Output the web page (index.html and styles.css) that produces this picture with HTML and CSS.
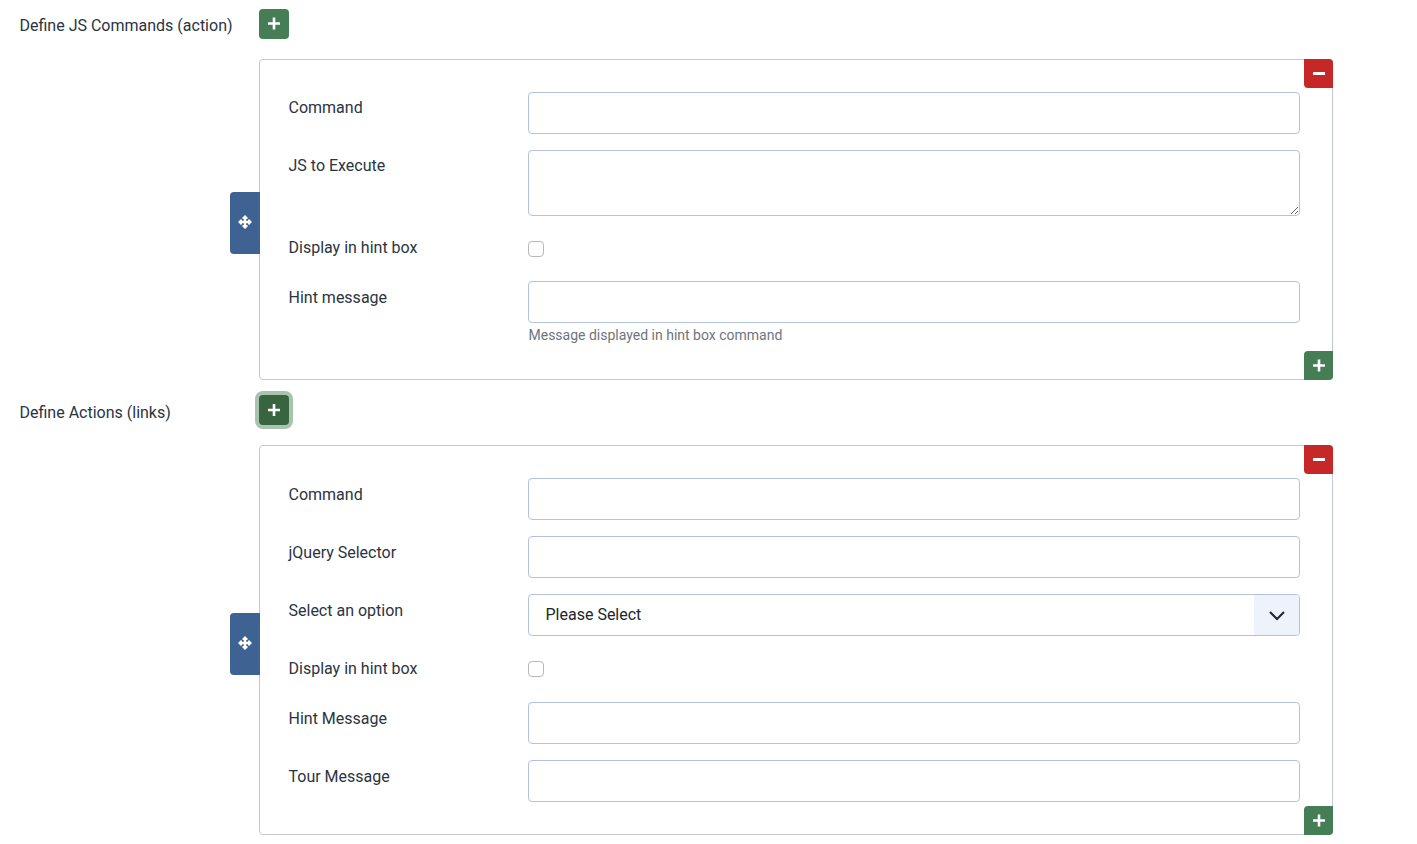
FILE: index.html
```html
<!DOCTYPE html>
<html lang="en">
<head>
<meta charset="utf-8">
<title>Define Commands</title>
<link rel="stylesheet" href="styles.css">
</head>
<body>
<svg class="sprite" width="0" height="0" aria-hidden="true">
  <symbol id="i-plus" viewBox="0 0 14 14"><path d="M5.700 1h2.600v4.700H13v2.600H8.300V13H5.700V8.300H1V5.700h4.700z" fill="#fff"/></symbol>
  <symbol id="i-minus" viewBox="0 0 14 14"><path d="M1 5.600h12v2.800H1z" fill="#fff"/></symbol>
  <symbol id="i-move" viewBox="0 0 14 14"><path d="M7 0l3 3-1 1H8.200v1.800H10V5l1-1 3 3-3 3-1-1V8.200H8.200V10H9l1 1-3 3-3-3 1-1h.8V8.200H4V9l-1 1-3-3 3-3 1 1v.8h1.800V4H5L4 3z" fill="#fff"/></symbol>
</svg>

<section class="field-head">
  <span class="head-label">Define JS Commands (action)</span>
  <button class="btn btn-add btn-square" type="button"><svg class="ico"><use href="#i-plus"/></svg></button>
</section>
<div class="card card-js">
  <button class="btn btn-move" type="button"><svg class="ico"><use href="#i-move"/></svg></button>
  <button class="btn btn-remove" type="button"><svg class="ico"><use href="#i-minus"/></svg></button>
  <div class="row"><label class="lbl">Command</label><input class="ctl" type="text"></div>
  <div class="row"><label class="lbl">JS to Execute</label><textarea class="ctl area"></textarea></div>
  <div class="row row-check"><label class="lbl">Display in hint box</label><input class="check" type="checkbox"></div>
  <div class="row row-last"><label class="lbl lbl-low">Hint message</label>
    <div class="cell"><input class="ctl" type="text"><small class="hint">Message displayed in hint box command</small></div>
  </div>
  <button class="btn btn-add btn-corner" type="button"><svg class="ico"><use href="#i-plus"/></svg></button>
</div>

<section class="field-head head-second">
  <span class="head-label head-label-low">Define Actions (links)</span>
  <button class="btn btn-add btn-square is-focus" type="button"><svg class="ico"><use href="#i-plus"/></svg></button>
</section>
<div class="card card-actions">
  <button class="btn btn-move" type="button"><svg class="ico"><use href="#i-move"/></svg></button>
  <button class="btn btn-remove" type="button"><svg class="ico"><use href="#i-minus"/></svg></button>
  <div class="row"><label class="lbl lbl-low">Command</label><input class="ctl" type="text"></div>
  <div class="row"><label class="lbl lbl-low">jQuery Selector</label><input class="ctl" type="text"></div>
  <div class="row"><label class="lbl lbl-low">Select an option</label>
    <div class="cell select-wrap">
      <select class="ctl sel"><option>Please Select</option></select>
      <span class="sel-arrow"><svg viewBox="0 0 16 16" width="16" height="16"><path d="M1 5l7 7 7-7" fill="none" stroke="#1c2530" stroke-width="2"/></svg></span>
    </div>
  </div>
  <div class="row row-check row-check2"><label class="lbl lbl-low">Display in hint box</label><input class="check" type="checkbox"></div>
  <div class="row"><label class="lbl lbl-low">Hint Message</label><input class="ctl" type="text"></div>
  <div class="row row-end"><label class="lbl lbl-low">Tour Message</label><input class="ctl" type="text"></div>
  <button class="btn btn-add btn-corner" type="button"><svg class="ico"><use href="#i-plus"/></svg></button>
</div>
</body>
</html>
```

FILE: styles.css
```css
* { box-sizing: border-box; }
html, body { margin: 0; padding: 0; }
body {
  padding: 9px 84px 0 19.5px;
  background: #fff;
  color: #2a3442;
  font-family: Roboto, "Liberation Sans", sans-serif;
  font-size: 16px;
  line-height: 24px;
  overflow: hidden;
}
.sprite { position: absolute; }
.field-head { display: flex; align-items: flex-start; height: 30px; }
.head-label { width: 239.5px; padding-top: 5px; }
.head-label-low { padding-top: 6px; }
.head-second { margin-top: 15px; }
.btn {
  border: 0; padding: 0; margin: 0;
  display: flex; align-items: center; justify-content: center;
  color: #fff; cursor: pointer;
}
.ico { width: 14px; height: 14px; display: block; }
.btn-add { background: #457d54; }
.btn-square { width: 30px; height: 30px; border-radius: 4px; }
.btn-square .ico { transform: translateY(-0.5px); }
.btn-square.is-focus .ico { transform: none; }
.is-focus { background: #38643f; box-shadow: 0 0 0 4px #a8c3ae; }
.card {
  position: relative;
  margin: 20px 0 0 239.5px;
  width: 1074px;
  border: 1px solid #c1c9d9;
  border-radius: 4px;
  padding: 32px 32px 32px 28.5px;
}
.card-js { height: 321px; }
.card-actions { height: 390px; }
.row { display: flex; align-items: flex-start; margin-bottom: 16px; }
.row-end { margin-bottom: 0; }
.row-last { margin-bottom: 0; }
.lbl { width: 239.5px; flex: none; padding-top: 4px; }
.lbl-low { padding-top: 5px; }
.cell { flex: 1; min-width: 0; }
.ctl {
  display: block;
  width: 100%;
  flex: 1;
  height: 42px;
  border: 1px solid #b2c3de;
  border-radius: 4px;
  background: #fff;
  color: #22262a;
  font: inherit;
  padding: 0 16px;
  margin: 0;
}
.area { height: 66px; }
.row-check { height: 33px; }
.row-check2 { height: 34px; }
.check {
  appearance: none;
  width: 16px; height: 16px;
  margin: 9px 0 0;
  border: 1px solid #b4b8bc;
  border-radius: 4px;
  background: #fff;
}
.hint {
  display: block;
  padding-left: 0.5px;
  font-size: 14px;
  line-height: 24px;
  color: #6d757e;
}
.select-wrap { position: relative; }
.sel { appearance: none; padding-left: 16.5px; }
.sel-arrow {
  position: absolute;
  top: 1px; right: 1px; bottom: 1px;
  width: 45px;
  background: #eef2fa;
  border-radius: 0 3px 3px 0;
  display: flex; align-items: center; justify-content: center;
  pointer-events: none;
}
.btn-move {
  position: absolute;
  left: -30px; top: 50%;
  margin-top: -27.5px;
  width: 30px; height: 62px;
  background: #3e6392;
  border-radius: 4px 0 0 4px;
}
.btn-move .ico { transform: translateY(-1px); }
.btn-remove {
  position: absolute;
  top: -1px; right: -1px;
  width: 29px; height: 29px;
  background: #c52827;
  border-radius: 0 4px 0 4px;
}
.btn-remove .ico { transform: translateY(-0.5px); }
.btn-corner {
  position: absolute;
  bottom: -1px; right: -1px;
  width: 29px; height: 29px;
  border-radius: 4px 0 4px 0;
}
.btn-corner .ico { transform: translateY(-0.5px); }
```
